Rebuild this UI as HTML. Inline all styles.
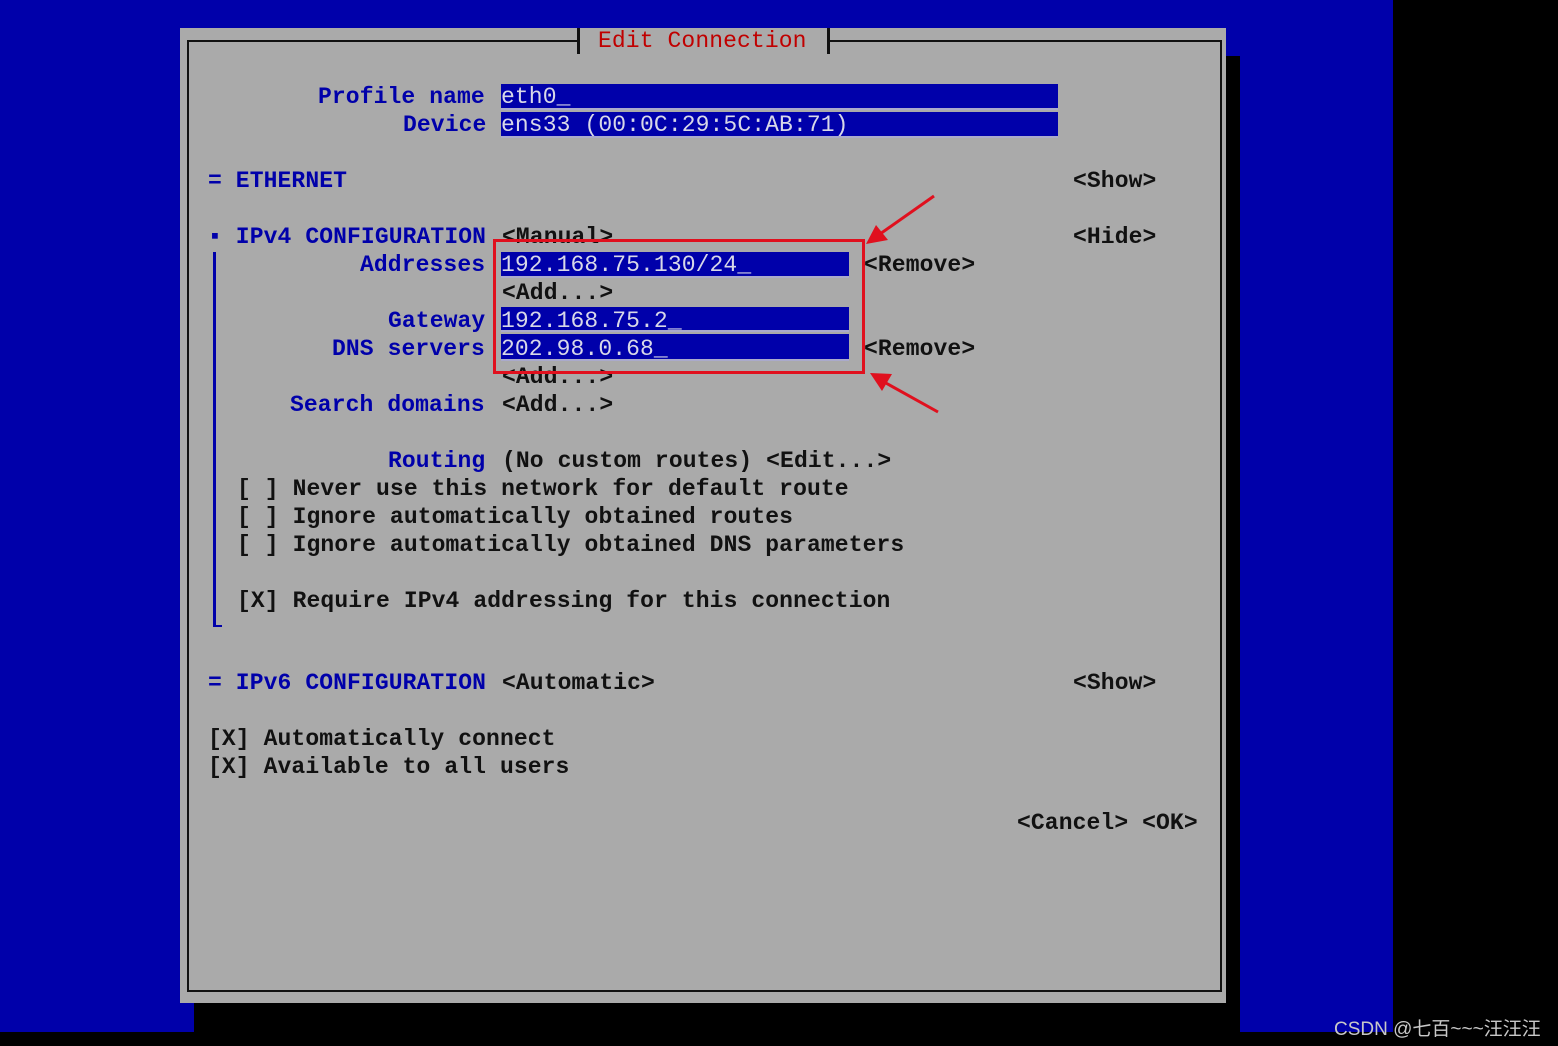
<!DOCTYPE html>
<html><head><meta charset="utf-8"><style>
html,body{margin:0;padding:0;}
body{width:1558px;height:1046px;background:#000;position:relative;overflow:hidden;font-family:"Liberation Mono",monospace;}
.t{position:absolute;font-size:23px;letter-spacing:0.1px;line-height:28px;height:28px;white-space:pre;font-weight:bold;color:#111;margin-top:1px;}
.b{color:#0000aa;}
.w{color:#d8d8e8;font-weight:normal;}
.r{color:#c00000;font-weight:normal;}
.box{position:absolute;}
</style></head><body>
<div class="box" style="left:0;top:0;width:1393px;height:1032px;background:#0000aa"></div>
<div class="box" style="left:1226px;top:56px;width:14px;height:976px;background:#000"></div>
<div class="box" style="left:194px;top:1003px;width:1046px;height:29px;background:#000"></div>
<div class="box" style="left:180px;top:28px;width:1046px;height:975px;background:#aaaaaa"></div>
<div class="box" style="left:187px;top:40px;width:1031px;height:948px;border:2px solid #111"></div>
<div class="box" style="left:579px;top:30px;width:250px;height:14px;background:#aaaaaa"></div>
<div class="box" style="left:577px;top:28px;width:3px;height:26px;background:#111"></div>
<div class="box" style="left:827px;top:28px;width:3px;height:26px;background:#111"></div>
<div class="t r" style="left:598px;top:26px">Edit Connection</div>

<div class="box" style="left:501px;top:84px;width:557px;height:24px;background:#0000aa;border-bottom:2px solid #aaaacc"></div>
<div class="box" style="left:501px;top:112px;width:557px;height:24px;background:#0000aa;border-bottom:2px solid #aaaacc"></div>
<div class="t b" style="left:318px;top:82px">Profile name</div>
<div class="t w" style="left:501px;top:82px">eth0_</div>
<div class="t b" style="left:403px;top:110px">Device</div>
<div class="t w" style="left:501px;top:110px">ens33 (00:0C:29:5C:AB:71)</div>

<div class="t b" style="left:208px;top:166px">= ETHERNET</div>
<div class="t" style="left:1073px;top:166px">&lt;Show&gt;</div>

<div class="t b" style="left:208px;top:222px">▪ IPv4 CONFIGURATION</div>
<div class="t" style="left:502px;top:222px">&lt;Manual&gt;</div>
<div class="t" style="left:1073px;top:222px">&lt;Hide&gt;</div>
<div class="box" style="left:213px;top:252px;width:3px;height:375px;background:#0000aa"></div>
<div class="box" style="left:213px;top:625px;width:9px;height:2px;background:#0000aa"></div>

<div class="box" style="left:501px;top:252px;width:348px;height:24px;background:#0000aa;border-bottom:2px solid #aaaacc"></div>
<div class="box" style="left:501px;top:307px;width:348px;height:23px;background:#0000aa;border-bottom:2px solid #aaaacc"></div>
<div class="box" style="left:501px;top:334px;width:348px;height:25px;background:#0000aa;border-bottom:2px solid #aaaacc"></div>
<div class="t b" style="left:360px;top:250px">Addresses</div>
<div class="t w" style="left:501px;top:250px">192.168.75.130/24_</div>
<div class="t" style="left:864px;top:250px">&lt;Remove&gt;</div>
<div class="t" style="left:502px;top:278px">&lt;Add...&gt;</div>
<div class="t b" style="left:388px;top:306px">Gateway</div>
<div class="t w" style="left:501px;top:306px">192.168.75.2_</div>
<div class="t b" style="left:332px;top:334px">DNS servers</div>
<div class="t w" style="left:501px;top:334px">202.98.0.68_</div>
<div class="t" style="left:864px;top:334px">&lt;Remove&gt;</div>
<div class="t" style="left:502px;top:362px">&lt;Add...&gt;</div>
<div class="t b" style="left:290px;top:390px">Search domains</div>
<div class="t" style="left:502px;top:390px">&lt;Add...&gt;</div>

<div class="t b" style="left:388px;top:446px">Routing</div>
<div class="t" style="left:502px;top:446px">(No custom routes) &lt;Edit...&gt;</div>
<div class="t" style="left:237px;top:474px">[ ] Never use this network for default route</div>
<div class="t" style="left:237px;top:502px">[ ] Ignore automatically obtained routes</div>
<div class="t" style="left:237px;top:530px">[ ] Ignore automatically obtained DNS parameters</div>
<div class="t" style="left:237px;top:586px">[X] Require IPv4 addressing for this connection</div>

<div class="t b" style="left:208px;top:668px">= IPv6 CONFIGURATION</div>
<div class="t" style="left:502px;top:668px">&lt;Automatic&gt;</div>
<div class="t" style="left:1073px;top:668px">&lt;Show&gt;</div>
<div class="t" style="left:208px;top:724px">[X] Automatically connect</div>
<div class="t" style="left:208px;top:752px">[X] Available to all users</div>
<div class="t" style="left:1017px;top:808px">&lt;Cancel&gt; &lt;OK&gt;</div>

<div class="box" style="left:493px;top:239px;width:366px;height:129px;border:3px solid #e0101e"></div>
<svg style="position:absolute;left:0;top:0" width="1558" height="1046">
<g stroke="#e0101e" stroke-width="3" fill="#e0101e">
<line x1="934" y1="196" x2="880" y2="234"/>
<polygon points="866,244 876,225 888,240" stroke="none"/>
<line x1="938" y1="412" x2="884" y2="382"/>
<polygon points="870,373 892,374 882,391" stroke="none"/>
</g></svg>
<div style="position:absolute;left:1334px;top:1014px;font-family:'Liberation Sans','Noto Sans CJK SC',sans-serif;font-size:19px;color:#c8c8c8;white-space:pre">CSDN @七百~~~汪汪汪</div>
</body></html>
